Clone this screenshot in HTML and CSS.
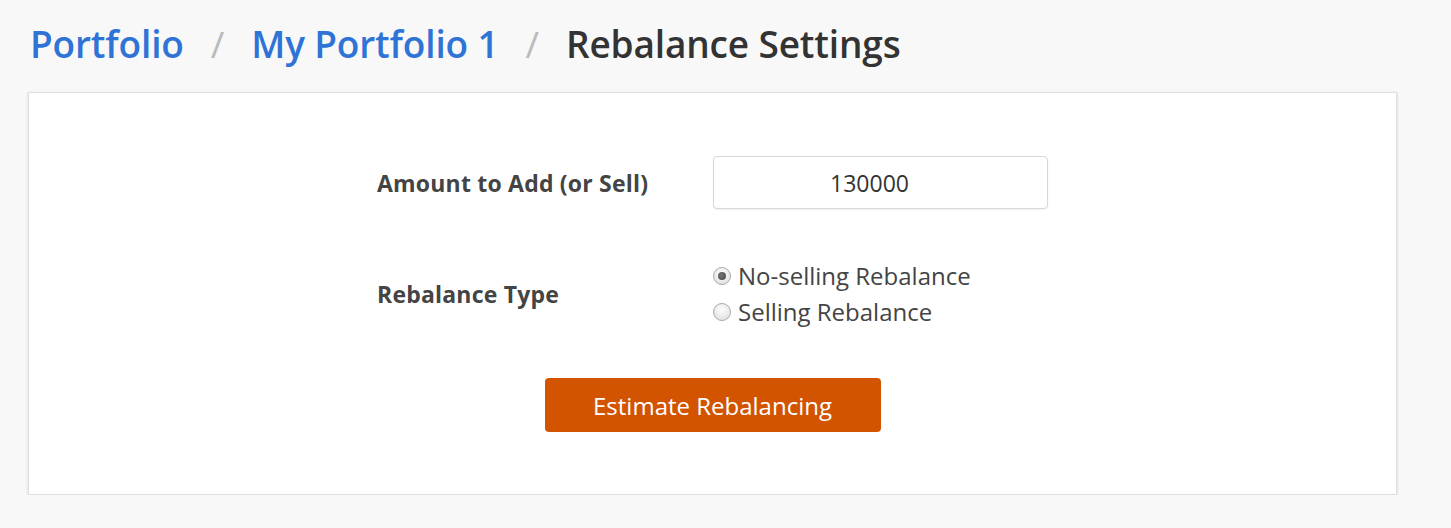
FILE: index.html
```html
<!DOCTYPE html>
<html>
<head>
<meta charset="utf-8">
<link rel="stylesheet" href="styles.css">
</head>
<body>
<div class="page">
  <h1 class="crumbs">
    <a class="crumb-link" href="#">Portfolio</a>
    <span class="sep">/</span>
    <a class="crumb-link" href="#">My Portfolio 1</a>
    <span class="sep">/</span>
    <span class="crumb-current">Rebalance Settings</span>
  </h1>
  <div class="card">
    <form class="form">
      <div class="row">
        <label class="label">Amount to Add (or Sell)</label>
        <div class="control"><input class="input" type="text" value="130000"></div>
      </div>
      <div class="row row-radio">
        <label class="label">Rebalance Type</label>
        <div class="control radios">
          <label class="radio"><input type="radio" name="t" checked><span>No-selling Rebalance</span></label>
          <label class="radio"><input type="radio" name="t"><span>Selling Rebalance</span></label>
        </div>
      </div>
      <div class="actions">
        <button class="btn" type="button">Estimate Rebalancing</button>
      </div>
    </form>
  </div>
</div>
</body>
</html>
```
FILE: styles.css
```css
* { box-sizing: border-box; }
html, body { margin: 0; padding: 0; }
body {
  background: #f8f8f8;
  font-family: "Open Sans", "Noto Sans", sans-serif;
  color: #444;
}
.page { padding: 0 54px 0 28px; }
.crumbs {
  margin: 0;
  padding: 18px 0 0 2px;
  height: 92px;
  font-size: 37px;
  font-weight: 600;
  display: flex;
  align-items: baseline;
  letter-spacing: -0.15px;
}
.crumb-link { color: #2f73d6; text-decoration: none; }
.sep { color: #bbb; font-weight: 400; margin: 0 27px; }
.crumb-current { color: #333; }
.card {
  background: #fff;
  border: 1px solid #e0e0e0;
  box-shadow: 0 1px 3px rgba(0,0,0,0.14);
  height: 403px;
  padding-top: 63px;
}
.form { display: flex; flex-direction: column; align-items: center; }
.row {
  display: grid;
  grid-template-columns: 336px 335px;
  align-items: center;
}
.label { font-size: 23px; font-weight: 700; color: #444; padding-left: 0; letter-spacing: 0.2px; }
.input {
  width: 335px;
  height: 53px;
  border: 1px solid #d8d8d8;
  border-radius: 4px;
  box-shadow: 0 1px 2px rgba(0,0,0,0.06);
  text-align: center;
  padding: 0 22px 0 0;
  font-family: inherit;
  font-size: 23px;
  color: #333;
}
.row-radio { margin-top: 49px; }
.radios { display: flex; flex-direction: column; }
.radio { display: flex; align-items: center; font-size: 24px; line-height: 36px; color: #444; }
.radio input {
  appearance: none;
  -webkit-appearance: none;
  margin: 0 7px 0 0;
  width: 18px;
  height: 18px;
  border-radius: 50%;
  border: 1px solid #a9a9a9;
  background: radial-gradient(circle at 50% 35%, #fdfdfd 0%, #e6e6e6 70%, #d4d4d4 100%);
  position: relative;
  flex: none;
}
.radio input:checked::after {
  content: "";
  position: absolute;
  left: 4px;
  top: 4px;
  width: 8px;
  height: 8px;
  border-radius: 50%;
  background: radial-gradient(circle at 40% 40%, #777 0%, #444 100%);
}
.actions { margin-top: 48px; }
.btn {
  width: 336px;
  height: 54px;
  background: #d35400;
  color: #fff;
  border: none;
  border-radius: 4px;
  font-family: inherit;
  font-size: 24px;
}
```
